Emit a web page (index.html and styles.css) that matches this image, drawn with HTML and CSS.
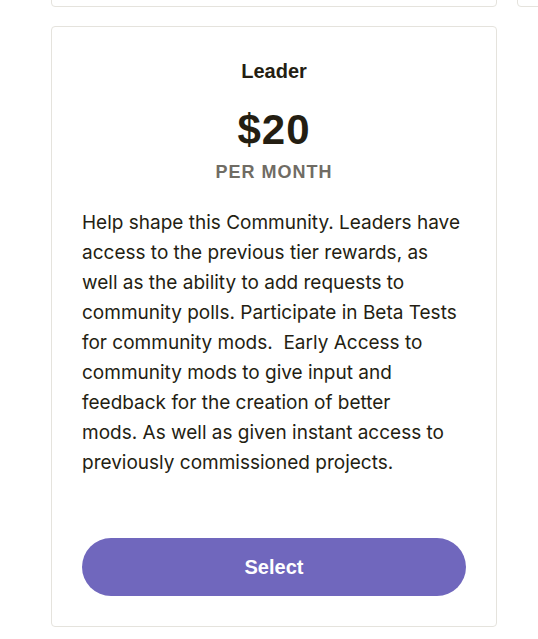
FILE: index.html
```html
<!DOCTYPE html>
<html lang="en">
<head>
<meta charset="utf-8">
<title>Leader tier</title>
<link rel="stylesheet" href="styles.css">
</head>
<body>
<div class="grid">
  <div class="card card-prev"></div>
  <div class="card card-prev"></div>
  <div class="card tier">
    <h2 class="tier-name">Leader</h2>
    <div class="price">$20</div>
    <div class="period">PER MONTH</div>
    <p class="desc">Help shape this Community. Leaders have access to the previous tier rewards, as well as the ability to add requests to community polls. Participate in Beta Tests for community mods.&nbsp; Early Access to community mods to give input and feedback for the creation of better<br>mods. As well as given instant access to previously commissioned projects.</p>
    <button class="select">Select</button>
  </div>
</div>
</body>
</html>
```
FILE: styles.css
```css
html, body {
  margin: 0;
  padding: 0;
  background: #ffffff;
}
body {
  font-family: "Liberation Sans", Arial, sans-serif;
  color: #241e12;
  overflow: hidden;
}
.grid {
  display: grid;
  grid-template-columns: 446px 446px;
  column-gap: 20px;
  row-gap: 19px;
  margin-top: -100px;
  padding-left: 51px;
}
.card {
  box-sizing: border-box;
  border: 1px solid #e5e3dd;
  border-radius: 4px;
  background: #fff;
}
.card-prev {
  height: 107px;
}
.tier {
  height: 601px;
  padding: 30px;
  display: flex;
  flex-direction: column;
  align-items: stretch;
}
.tier-name {
  margin: 2px 0 0;
  font-size: 20px;
  line-height: 24px;
  font-weight: 700;
  text-align: center;
  color: #241e12;
}
.price {
  margin-top: 25px;
  font-size: 42px;
  line-height: 44px;
  font-weight: 700;
  text-align: center;
  letter-spacing: 1px;
  color: #241e12;
}
.period {
  margin-top: 9px;
  font-size: 18px;
  line-height: 22px;
  font-weight: 700;
  letter-spacing: 1px;
  text-align: center;
  color: #706c64;
}
.desc {
  margin: 25px 0 0;
  font-family: Inter, "Noto Sans", sans-serif;
  font-size: 19px;
  line-height: 30px;
  color: #241e12;
}
.select {
  margin-top: auto;
  height: 58px;
  border: none;
  border-radius: 29px;
  background: #7067bd;
  color: #ffffff;
  font-family: "Liberation Sans", Arial, sans-serif;
  font-size: 20px;
  font-weight: 700;
  cursor: pointer;
}
```
